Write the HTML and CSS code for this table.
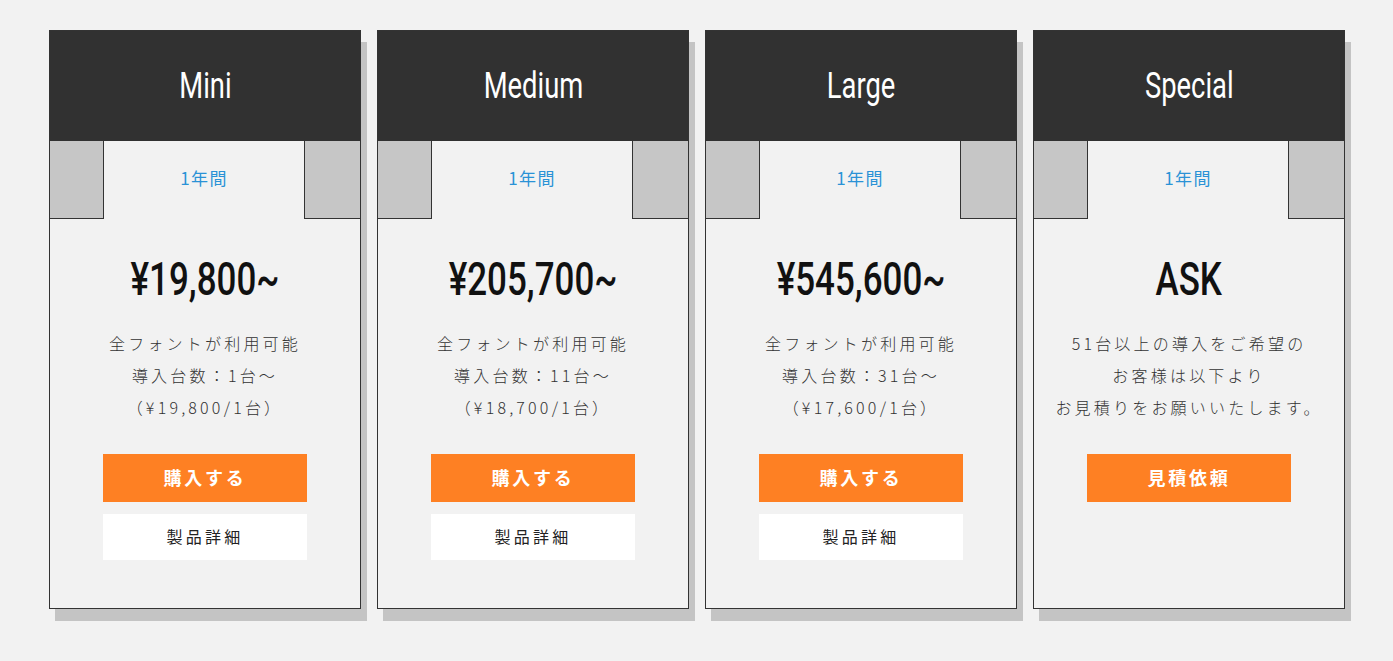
FILE: index.html
```html
<!DOCTYPE html>
<html lang="ja">
<head>
<meta charset="utf-8">
<title>Plans</title>
<link rel="stylesheet" href="styles.css">
</head>
<body>
<div class="plans">
  <div class="card">
    <div class="head"><span class="cond">Mini</span></div>
    <div class="tabs"><div class="side left"></div><div class="mid">1年間</div><div class="side right"></div></div>
    <div class="body">
      <div class="price"><span class="cond">¥19,800~</span></div>
      <p class="desc">全フォントが利用可能<br>導入台数：1台～<br>（¥19,800/1台）</p>
      <a class="btn buy" href="#">購入する</a>
      <a class="btn detail" href="#">製品詳細</a>
    </div>
  </div>
  <div class="card">
    <div class="head"><span class="cond">Medium</span></div>
    <div class="tabs"><div class="side left"></div><div class="mid">1年間</div><div class="side right"></div></div>
    <div class="body">
      <div class="price"><span class="cond">¥205,700~</span></div>
      <p class="desc">全フォントが利用可能<br>導入台数：11台～<br>（¥18,700/1台）</p>
      <a class="btn buy" href="#">購入する</a>
      <a class="btn detail" href="#">製品詳細</a>
    </div>
  </div>
  <div class="card">
    <div class="head"><span class="cond">Large</span></div>
    <div class="tabs"><div class="side left"></div><div class="mid">1年間</div><div class="side right"></div></div>
    <div class="body">
      <div class="price"><span class="cond">¥545,600~</span></div>
      <p class="desc">全フォントが利用可能<br>導入台数：31台～<br>（¥17,600/1台）</p>
      <a class="btn buy" href="#">購入する</a>
      <a class="btn detail" href="#">製品詳細</a>
    </div>
  </div>
  <div class="card">
    <div class="head"><span class="cond">Special</span></div>
    <div class="tabs"><div class="side left"></div><div class="mid">1年間</div><div class="side right"></div></div>
    <div class="body">
      <div class="price"><span class="cond">ASK</span></div>
      <p class="desc">51台以上の導入をご希望の<br>お客様は以下より<br>お見積りをお願いいたします。</p>
      <a class="btn buy" href="#">見積依頼</a>
    </div>
  </div>
</div>
</body>
</html>
```
FILE: styles.css
```css
html, body {
  margin: 0;
  padding: 0;
  background: #f2f2f2;
}
body {
  font-family: "Noto Sans CJK JP", "Noto Sans", sans-serif;
  color: #333;
}
.plans {
  display: flex;
  gap: 16px;
  padding: 30px 0 40px 49px;
  align-items: stretch;
}
.card {
  width: 310px;
  border: 1px solid #333;
  background: #f2f2f2;
  box-shadow: 6px 12px 0 #c4c4c4;
  display: flex;
  flex-direction: column;
}
.cond {
  display: inline-block;
  font-family: Roboto, "Liberation Sans", sans-serif;
  transform: scaleX(0.76);
  white-space: nowrap;
}
.head {
  height: 110px;
  background: #313131;
  color: #fff;
  display: flex;
  align-items: center;
  justify-content: center;
  font-size: 36px;
  font-weight: 400;
}
.tabs {
  display: flex;
  height: 78px;
}
.side {
  background: #c6c6c6;
  border-bottom: 1px solid #333;
  box-sizing: border-box;
}
.side.left {
  width: 54px;
  border-right: 1px solid #333;
}
.side.right {
  flex: 1;
  border-left: 1px solid #333;
}
.mid {
  width: 200px;
  display: flex;
  align-items: center;
  justify-content: center;
  color: #2a92d6;
  font-size: 17px;
  font-weight: 400;
  letter-spacing: 0.08em;
  padding-bottom: 6px;
  box-sizing: border-box;
}
.body {
  flex: 1;
  display: flex;
  flex-direction: column;
  align-items: center;
  padding: 33px 0 48px;
}
.price {
  font-size: 46px;
  line-height: 46px;
  height: 46px;
  color: #111;
  font-weight: 500;
}
.desc {
  margin: 29px 0 31px;
  font-size: 16px;
  line-height: 32px;
  letter-spacing: 0.2em;
  text-align: center;
  color: #333;
  font-weight: 300;
}
.btn {
  display: flex;
  align-items: center;
  justify-content: center;
  width: 204px;
  text-decoration: none;
  box-sizing: border-box;
}
.btn.buy {
  height: 48px;
  background: #fe8023;
  color: #fff;
  font-weight: 700;
  font-size: 18px;
  letter-spacing: 0.15em;
  padding-bottom: 3px;
}
.btn.detail {
  margin-top: 12px;
  height: 46px;
  background: #fff;
  color: #222;
  font-size: 16px;
  letter-spacing: 0.2em;
  padding-bottom: 3px;
}
```
